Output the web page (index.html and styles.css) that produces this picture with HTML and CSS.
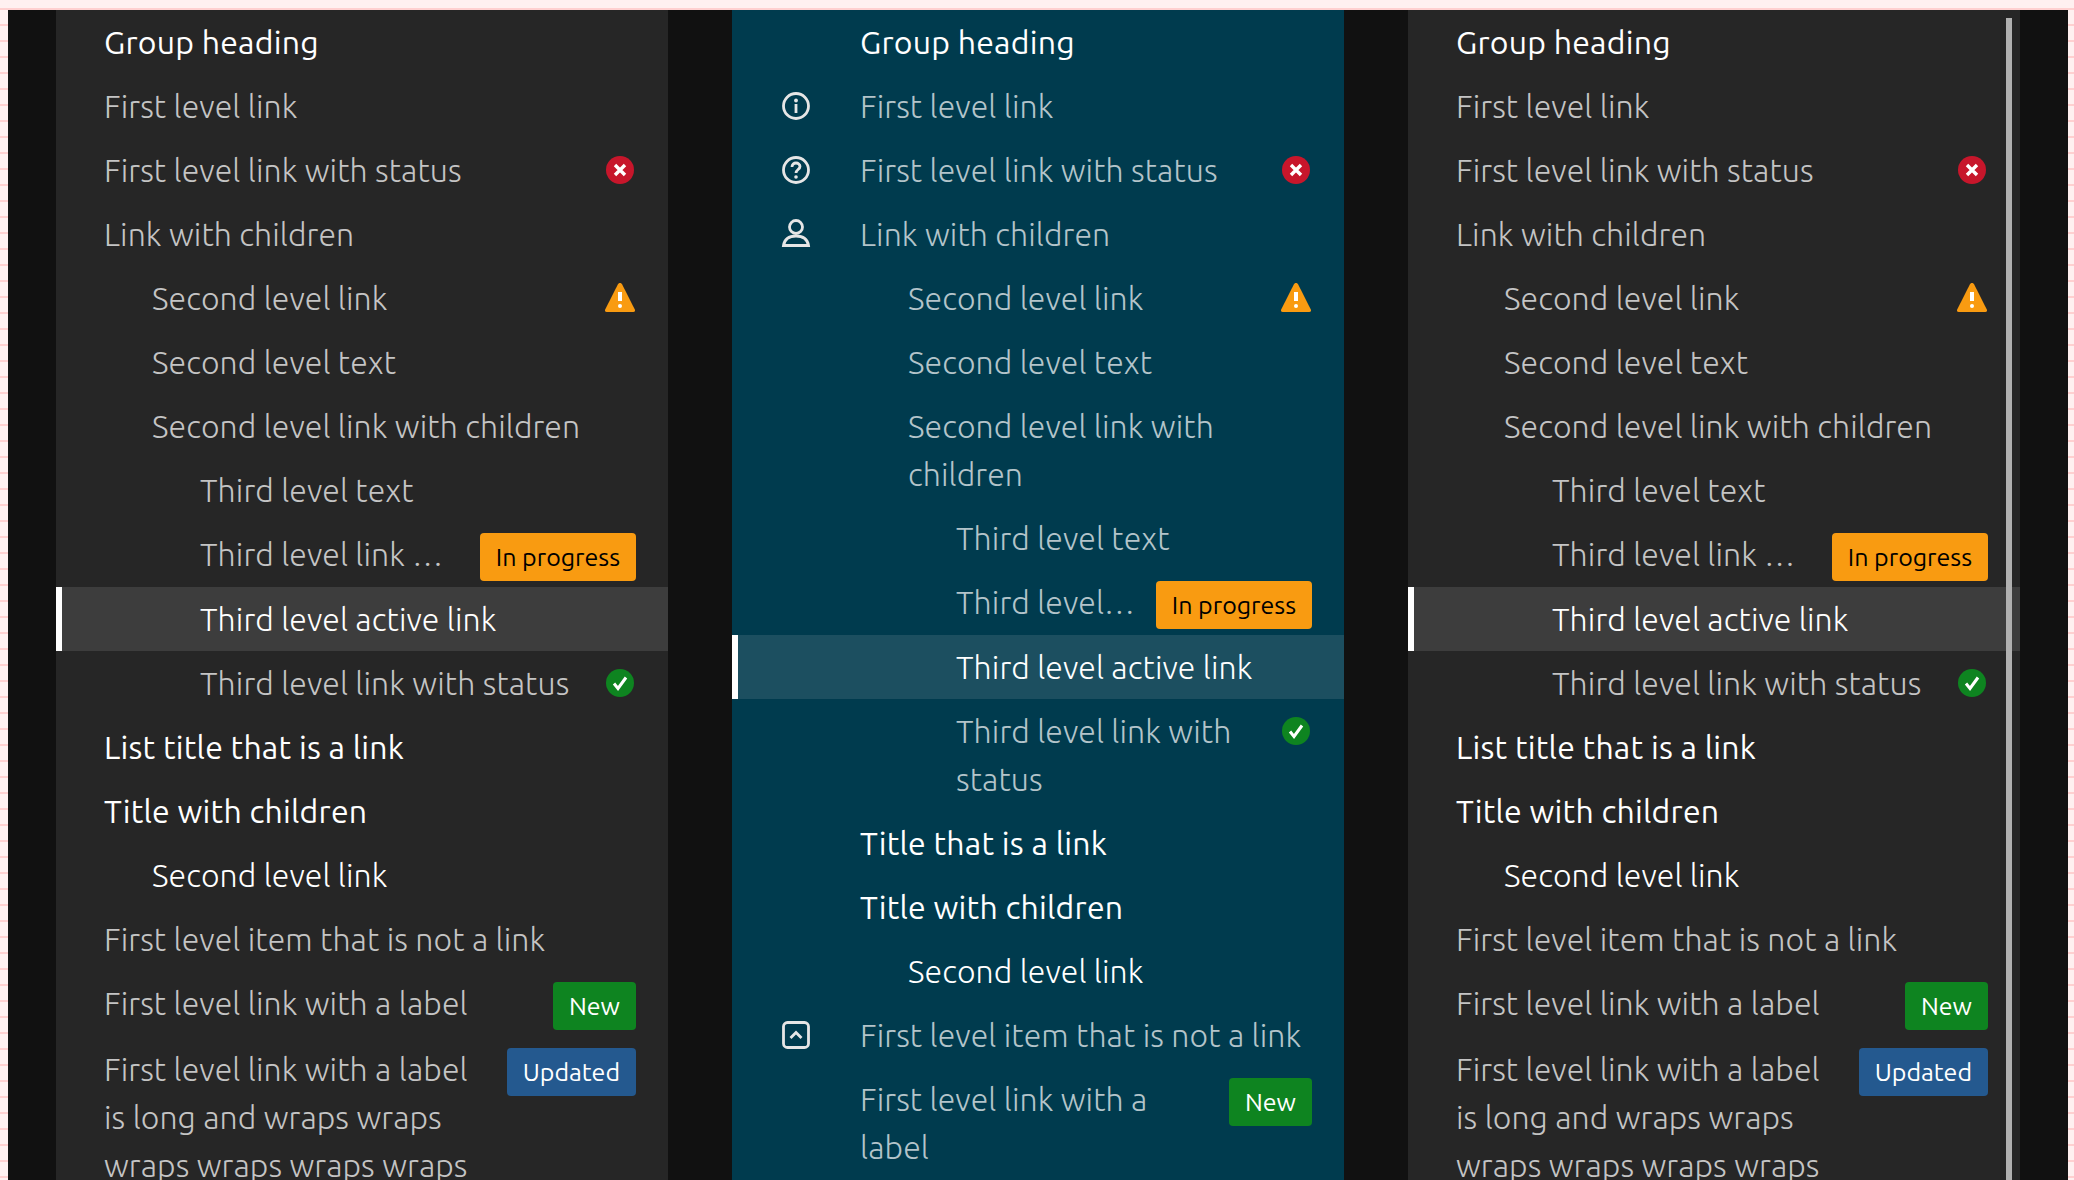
FILE: index.html
```html
<!DOCTYPE html>
<html lang="en">
  <head>
    <meta charset="UTF-8" />
    <title>Side navigation</title>
    <link rel="stylesheet" href="styles.css">
  </head>
  <body>
    <div class="wrapper">
      <nav class="sideNav">
        <ul>
          <li class="row heading"><span class="txt">Group heading</span></li>
          <li class="row"><span class="txt">First level link</span></li>
          <li class="row"><span class="txt">First level link with status</span><svg class="status" viewBox="0 0 32 32"><circle cx="16" cy="16" r="14" fill="#c7162b"/><path d="M11 11l10 10M21 11L11 21" stroke="#fff" stroke-width="3.400" fill="none"/></svg></li>
          <li class="row"><span class="txt">Link with children</span></li>
          <li class="row lv2"><span class="txt">Second level link</span><svg class="status" viewBox="0 0 32 32"><path d="M16 1c1 0 1.600.500 2.200 1.500l12.600 25c.7 1.500 0 2.500-1.500 2.500H2.700c-1.500 0-2.200-1-1.500-2.500L13.800 2.500C14.400 1.500 15 1 16 1z" fill="#f99b11"/><path d="M14 10h4v9h-4z" fill="#fff"/><circle cx="16" cy="24" r="2" fill="#fff"/></svg></li>
          <li class="row lv2"><span class="txt">Second level text</span></li>
          <li class="row lv2"><span class="txt">Second level link with children</span></li>
          <li class="row lv3"><span class="txt">Third level text</span></li>
          <li class="row lv3"><span class="txt clip">Third level link with a long label</span><span class="label orange">In progress</span></li>
          <li class="row lv3 active"><span class="txt">Third level active link</span></li>
          <li class="row lv3"><span class="txt">Third level link with status</span><svg class="status" viewBox="0 0 32 32"><circle cx="16" cy="16" r="14" fill="#0e8420"/><path d="M10 16.500l4 5L22 10.500" stroke="#fff" stroke-width="3" fill="none"/></svg></li>
          <li class="row title"><span class="txt">List title that is a link</span></li>
          <li class="row title"><span class="txt">Title with children</span></li>
          <li class="row lv2 bright"><span class="txt">Second level link</span></li>
          <li class="row"><span class="txt">First level item that is not a link</span></li>
          <li class="row"><span class="txt">First level link with a label</span><span class="label green">New</span></li>
          <li class="row"><span class="txt">First level link with a label is long and wraps wraps wraps wraps wraps wraps wraps wraps</span><span class="label blue">Updated</span></li>
        </ul>
      </nav>

      <nav class="sideNav teal iconed">
        <ul>
          <li class="row heading"><span class="txt">Group heading</span></li>
          <li class="row"><svg class="icon" viewBox="0 0 32 32"><circle cx="16" cy="16" r="12.500" fill="none" stroke="#e6e6e6" stroke-width="2.800"/><path d="M16 14v9" stroke="#e6e6e6" stroke-width="2.800"/><circle cx="16" cy="10.500" r="1.900" fill="#e6e6e6"/></svg><span class="txt">First level link</span></li>
          <li class="row"><svg class="icon" viewBox="0 0 32 32"><circle cx="16" cy="16" r="12.500" fill="none" stroke="#e6e6e6" stroke-width="2.800"/><path d="M12 13c0-2.500 1.800-4 4-4s4 1.500 4 3.500c0 3-4 3-4 6.500" fill="none" stroke="#e6e6e6" stroke-width="2.800"/><circle cx="16" cy="23" r="1.800" fill="#e6e6e6"/></svg><span class="txt">First level link with status</span><svg class="status" viewBox="0 0 32 32"><circle cx="16" cy="16" r="14" fill="#c7162b"/><path d="M11 11l10 10M21 11L11 21" stroke="#fff" stroke-width="3.400" fill="none"/></svg></li>
          <li class="row"><svg class="icon" viewBox="0 0 32 32"><circle cx="16" cy="9" r="6.500" fill="none" stroke="#e6e6e6" stroke-width="2.800"/><path d="M3.500 27.500C4.500 21.500 9 18 16 18s11.500 3.500 12.500 9.500z" fill="none" stroke="#e6e6e6" stroke-width="2.800"/></svg><span class="txt">Link with children</span></li>
          <li class="row lv2"><span class="txt">Second level link</span><svg class="status" viewBox="0 0 32 32"><path d="M16 1c1 0 1.600.500 2.200 1.500l12.600 25c.7 1.500 0 2.500-1.500 2.500H2.700c-1.500 0-2.200-1-1.500-2.500L13.800 2.500C14.400 1.500 15 1 16 1z" fill="#f99b11"/><path d="M14 10h4v9h-4z" fill="#fff"/><circle cx="16" cy="24" r="2" fill="#fff"/></svg></li>
          <li class="row lv2"><span class="txt">Second level text</span></li>
          <li class="row lv2"><span class="txt">Second level link with children</span></li>
          <li class="row lv3"><span class="txt">Third level text</span></li>
          <li class="row lv3"><span class="txt clip">Third level link with a long label</span><span class="label orange">In progress</span></li>
          <li class="row lv3 active"><span class="txt">Third level active link</span></li>
          <li class="row lv3"><span class="txt">Third level link with status</span><svg class="status" viewBox="0 0 32 32"><circle cx="16" cy="16" r="14" fill="#0e8420"/><path d="M10 16.500l4 5L22 10.500" stroke="#fff" stroke-width="3" fill="none"/></svg></li>
          <li class="row title"><span class="txt">Title that is a link</span></li>
          <li class="row title"><span class="txt">Title with children</span></li>
          <li class="row lv2 bright"><span class="txt">Second level link</span></li>
          <li class="row"><svg class="icon" viewBox="0 0 32 32"><rect x="3.500" y="3.500" width="25" height="25" rx="4" fill="none" stroke="#e6e6e6" stroke-width="2.800"/><path d="M10.500 19l5.500-5.500 5.500 5.500" fill="none" stroke="#e6e6e6" stroke-width="2.800"/></svg><span class="txt">First level item that is not a link</span></li>
          <li class="row"><span class="txt">First level link with a label</span><span class="label green">New</span></li>
        </ul>
      </nav>

      <nav class="sideNav scrolled">
        <ul>
          <li class="row heading"><span class="txt">Group heading</span></li>
          <li class="row"><span class="txt">First level link</span></li>
          <li class="row"><span class="txt">First level link with status</span><svg class="status" viewBox="0 0 32 32"><circle cx="16" cy="16" r="14" fill="#c7162b"/><path d="M11 11l10 10M21 11L11 21" stroke="#fff" stroke-width="3.400" fill="none"/></svg></li>
          <li class="row"><span class="txt">Link with children</span></li>
          <li class="row lv2"><span class="txt">Second level link</span><svg class="status" viewBox="0 0 32 32"><path d="M16 1c1 0 1.600.500 2.200 1.500l12.600 25c.7 1.500 0 2.500-1.500 2.500H2.700c-1.500 0-2.200-1-1.500-2.500L13.800 2.500C14.400 1.500 15 1 16 1z" fill="#f99b11"/><path d="M14 10h4v9h-4z" fill="#fff"/><circle cx="16" cy="24" r="2" fill="#fff"/></svg></li>
          <li class="row lv2"><span class="txt">Second level text</span></li>
          <li class="row lv2"><span class="txt">Second level link with children</span></li>
          <li class="row lv3"><span class="txt">Third level text</span></li>
          <li class="row lv3"><span class="txt clip">Third level link with a long label</span><span class="label orange">In progress</span></li>
          <li class="row lv3 active"><span class="txt">Third level active link</span></li>
          <li class="row lv3"><span class="txt">Third level link with status</span><svg class="status" viewBox="0 0 32 32"><circle cx="16" cy="16" r="14" fill="#0e8420"/><path d="M10 16.500l4 5L22 10.500" stroke="#fff" stroke-width="3" fill="none"/></svg></li>
          <li class="row title"><span class="txt">List title that is a link</span></li>
          <li class="row title"><span class="txt">Title with children</span></li>
          <li class="row lv2 bright"><span class="txt">Second level link</span></li>
          <li class="row"><span class="txt">First level item that is not a link</span></li>
          <li class="row"><span class="txt">First level link with a label</span><span class="label green">New</span></li>
          <li class="row"><span class="txt">First level link with a label is long and wraps wraps wraps wraps wraps wraps wraps wraps</span><span class="label blue">Updated</span></li>
        </ul>
        <div class="scrollBar"></div>
      </nav>
    </div>
  </body>
</html>
```

FILE: styles.css
```css
html,
body {
  height: 100%;
  margin: 0;
  overflow: hidden;
}
body {
  padding: 8px 6px 0 8px;
  box-sizing: border-box;
  background-color: #fff0f0;
  background-image: repeating-linear-gradient(to bottom, #ffd0d0 0, #ffd0d0 2px, transparent 2px, transparent 16px);
  background-position: 0 8px;
  font-family: Ubuntu, "Noto Sans", sans-serif;
}
ul {
  margin: 0;
  padding: 0;
  list-style: none;
}
.wrapper {
  display: flex;
  gap: 64px;
  height: calc(100% + 400px);
  margin-top: 2px;
  padding: 0 48px;
  background-color: #111;
}
.sideNav {
  position: relative;
  width: 612px;
  background-color: #262626;
  color: #c4c4c4;
  font-size: 32px;
  font-weight: 300;
  line-height: 48px;
  letter-spacing: 0.07px;
}
.teal {
  background-color: #003b4e;
  color: #b3c4ca;
}
.row {
  display: flex;
  align-items: flex-start;
  gap: 16px;
  padding: 8px 32px 8px 48px;
}
.lv2 {
  padding-left: 96px;
}
.lv3 {
  padding-left: 144px;
}
.iconed .row {
  padding-left: 128px;
}
.iconed .lv2 {
  padding-left: 176px;
}
.iconed .lv3 {
  padding-left: 224px;
}
.txt {
  flex: 1;
  min-width: 0;
}
.clip {
  overflow: hidden;
  white-space: nowrap;
  text-overflow: ellipsis;
}
.heading .txt,
.title .txt {
  color: #fff;
  font-weight: 400;
  letter-spacing: 0.22px;
}
.bright .txt {
  color: #fff;
}
.active {
  padding-left: 138px;
  border-left: 6px solid #fff;
  background-color: #3d3d3d;
}
.active .txt {
  color: #fff;
}
.teal .active {
  padding-left: 218px;
  background-color: #1c4f60;
}
.icon {
  flex: none;
  width: 32px;
  height: 32px;
  margin: 8px 32px 0 -80px;
}
.status {
  flex: none;
  width: 32px;
  height: 32px;
  margin-top: 8px;
}
.label {
  flex: none;
  margin: 3px 0 -2px;
  padding: 0 16px;
  border-radius: 4px;
  color: #fff;
  font-size: 25px;
  font-weight: 400;
  line-height: 48px;
  letter-spacing: -0.02px;
}
.orange {
  background-color: #f99b11;
  color: #000;
}
.green {
  margin-bottom: -1px;
  background-color: #0e8420;
}
.blue {
  background-color: #24598f;
}
.scrollBar {
  position: absolute;
  top: 8px;
  right: 8px;
  bottom: 0;
  width: 6px;
  background-color: #b0b0b0;
}
```
